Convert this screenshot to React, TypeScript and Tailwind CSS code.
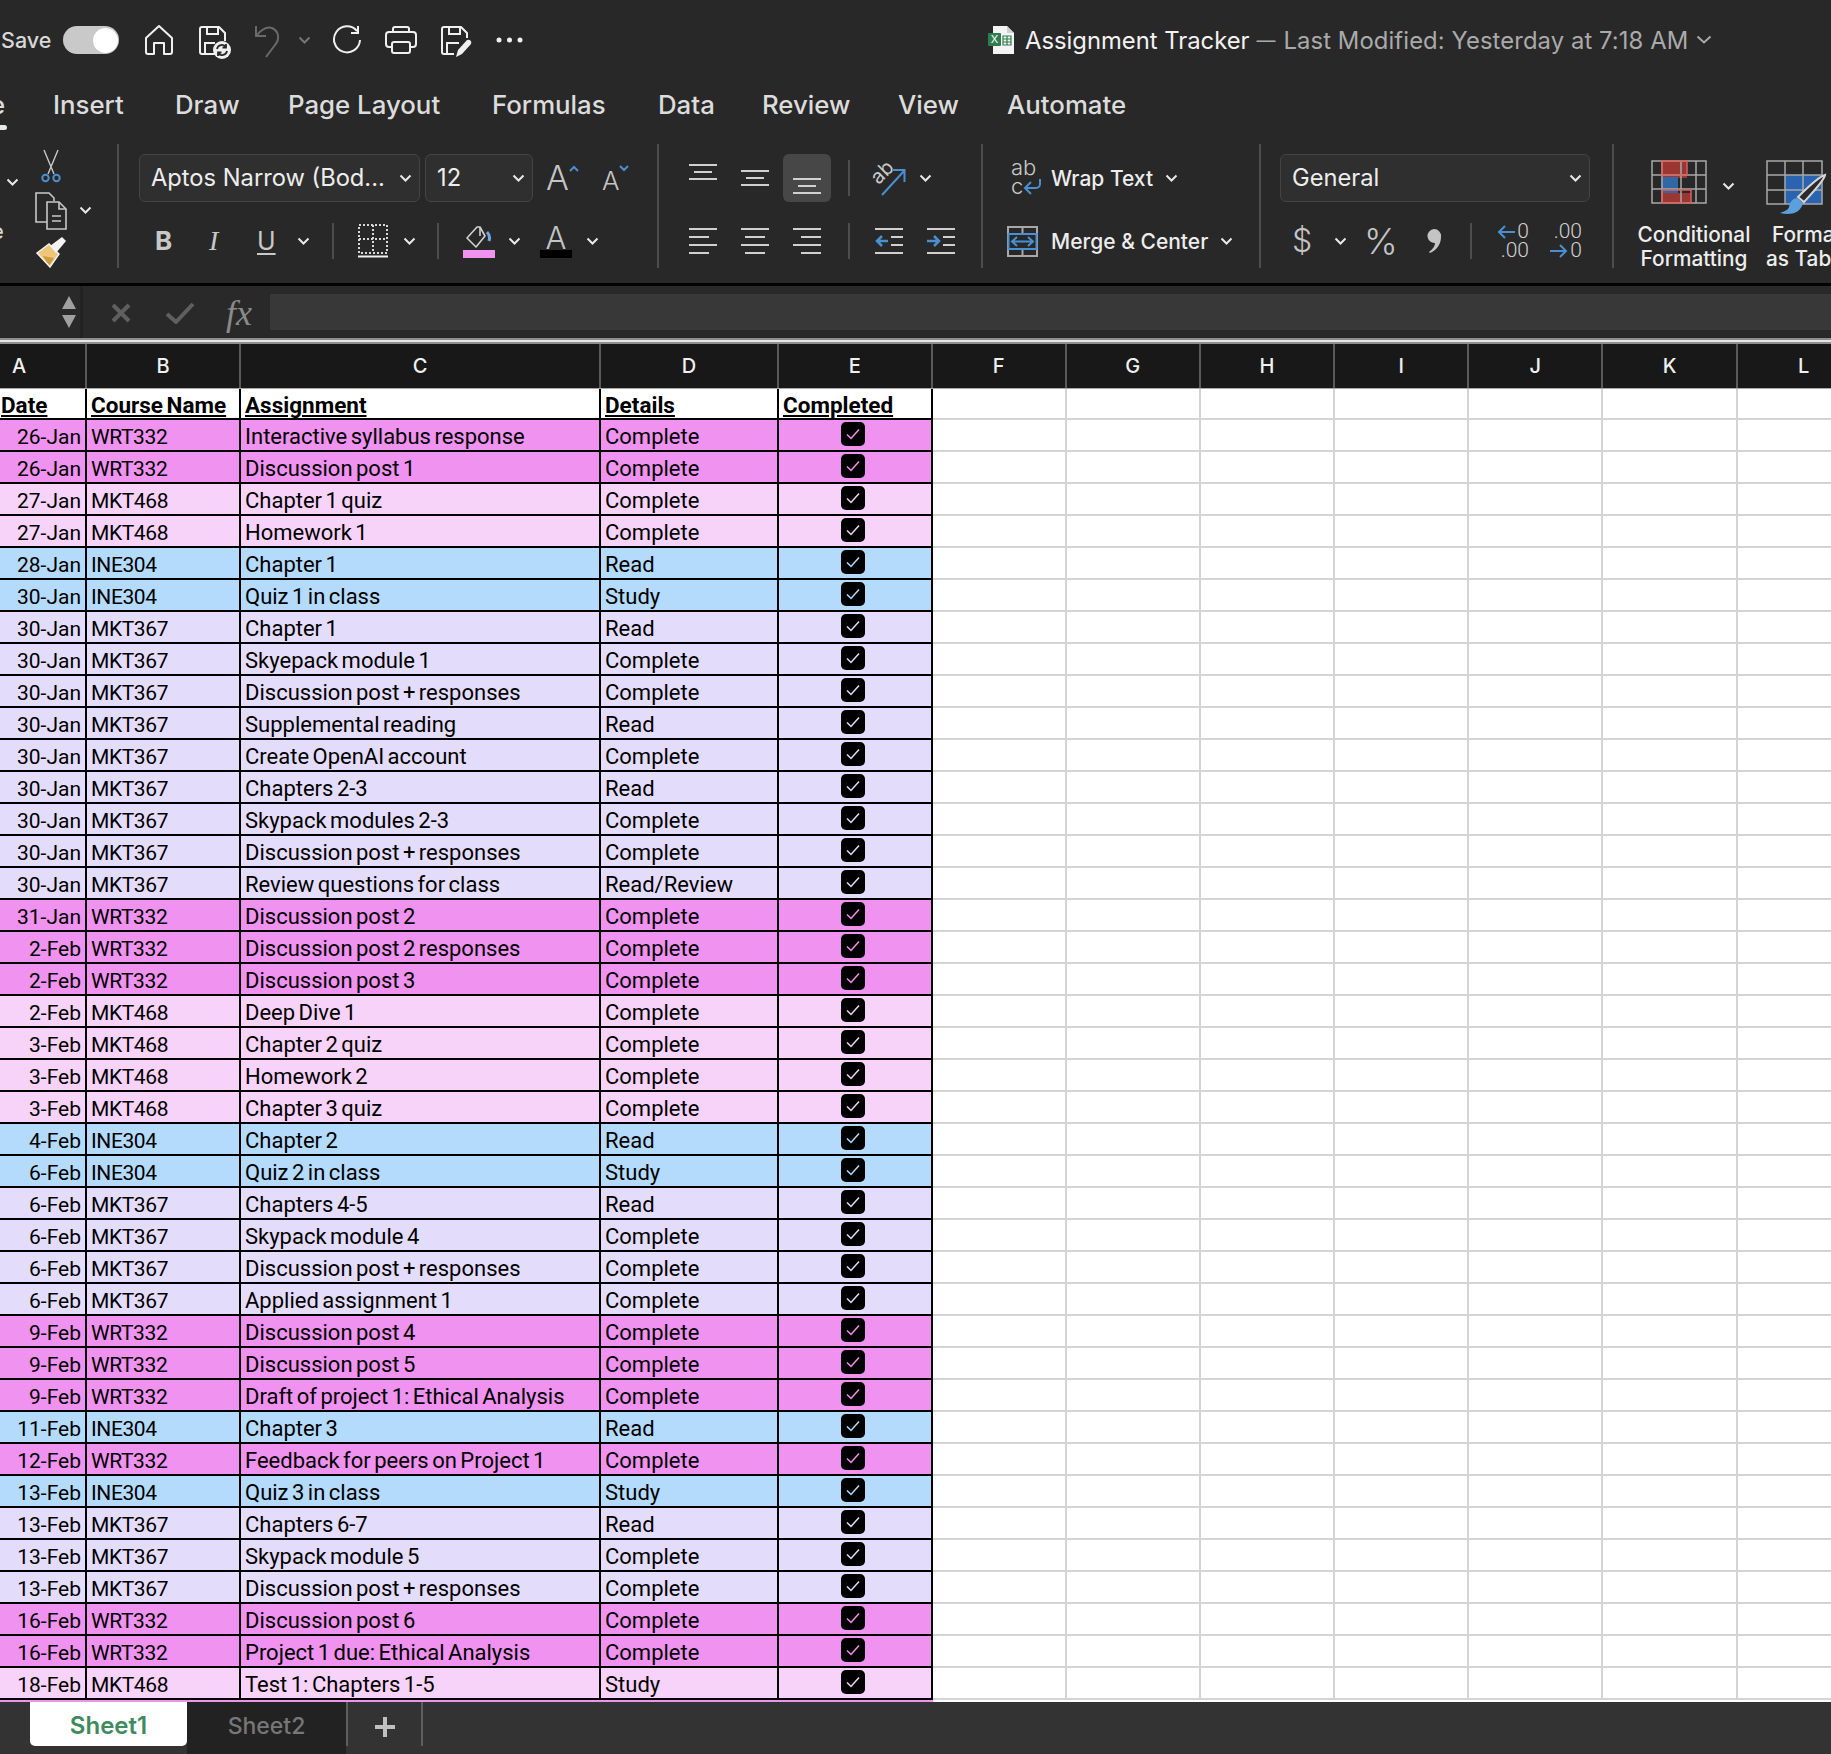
import React from "react";

type Row = [string, "W" | "M" | "I" | "K", string, string];

const courseName = { W: "WRT332", M: "MKT468", I: "INE304", K: "MKT367" };
const rowBg = { W: "bg-[#f092f0]", M: "bg-[#f7d3f9]", I: "bg-[#b4dbfb]", K: "bg-[#e4dcfb]" };
const checkColor = { W: "text-[#f092f0]", M: "text-[#f7d3f9]", I: "text-[#b4dbfb]", K: "text-[#e4dcfb]" };

const rows: Row[] = [
  ["26-Jan", "W", "Interactive syllabus response", "Complete"],
  ["26-Jan", "W", "Discussion post 1", "Complete"],
  ["27-Jan", "M", "Chapter 1 quiz", "Complete"],
  ["27-Jan", "M", "Homework 1", "Complete"],
  ["28-Jan", "I", "Chapter 1", "Read"],
  ["30-Jan", "I", "Quiz 1 in class", "Study"],
  ["30-Jan", "K", "Chapter 1", "Read"],
  ["30-Jan", "K", "Skyepack module 1", "Complete"],
  ["30-Jan", "K", "Discussion post + responses", "Complete"],
  ["30-Jan", "K", "Supplemental reading", "Read"],
  ["30-Jan", "K", "Create OpenAI account", "Complete"],
  ["30-Jan", "K", "Chapters 2-3", "Read"],
  ["30-Jan", "K", "Skypack modules 2-3", "Complete"],
  ["30-Jan", "K", "Discussion post + responses", "Complete"],
  ["30-Jan", "K", "Review questions for class", "Read/Review"],
  ["31-Jan", "W", "Discussion post 2", "Complete"],
  ["2-Feb", "W", "Discussion post 2 responses", "Complete"],
  ["2-Feb", "W", "Discussion post 3", "Complete"],
  ["2-Feb", "M", "Deep Dive 1", "Complete"],
  ["3-Feb", "M", "Chapter 2 quiz", "Complete"],
  ["3-Feb", "M", "Homework 2", "Complete"],
  ["3-Feb", "M", "Chapter 3 quiz", "Complete"],
  ["4-Feb", "I", "Chapter 2", "Read"],
  ["6-Feb", "I", "Quiz 2 in class", "Study"],
  ["6-Feb", "K", "Chapters 4-5", "Read"],
  ["6-Feb", "K", "Skypack module 4", "Complete"],
  ["6-Feb", "K", "Discussion post + responses", "Complete"],
  ["6-Feb", "K", "Applied assignment 1", "Complete"],
  ["9-Feb", "W", "Discussion post 4", "Complete"],
  ["9-Feb", "W", "Discussion post 5", "Complete"],
  ["9-Feb", "W", "Draft of project 1: Ethical Analysis", "Complete"],
  ["11-Feb", "I", "Chapter 3", "Read"],
  ["12-Feb", "W", "Feedback for peers on Project 1", "Complete"],
  ["13-Feb", "I", "Quiz 3 in class", "Study"],
  ["13-Feb", "K", "Chapters 6-7", "Read"],
  ["13-Feb", "K", "Skypack module 5", "Complete"],
  ["13-Feb", "K", "Discussion post + responses", "Complete"],
  ["16-Feb", "W", "Discussion post 6", "Complete"],
  ["16-Feb", "W", "Project 1 due: Ethical Analysis", "Complete"],
  ["18-Feb", "M", "Test 1: Chapters 1-5", "Study"],
];

const emptyCols = ["F", "G", "H", "I", "J", "K", "L"];
const gridCols = "grid grid-cols-[87px_154px_360px_178px_153.500px_repeat(7,134.2px)]";

function Chevron({ className = "" }: { className?: string }) {
  return (
    <svg width="13" height="9" viewBox="0 0 13 9" fill="none" stroke="#e8e8e8" strokeWidth="2" className={`shrink-0 ${className}`}>
      <path d="M1.5 1.5l5 5 5-5" />
    </svg>
  );
}

function AlignLines({ widths }: { widths: [number, number, number][] }) {
  return (
    <svg width="28" height="28" viewBox="0 0 28 28" stroke="#d0d0d0" strokeWidth="2" className="shrink-0">
      {widths.map(([x1, x2, y], i) => (
        <line key={i} x1={x1} x2={x2} y1={y} y2={y} />
      ))}
    </svg>
  );
}

function TopIcons() {
  return (
    <>
      <svg width="30" height="32" viewBox="0 0 30 32" fill="none" stroke="#f0f0f0" strokeWidth="2" className="ml-[25px]">
        <path d="M2 14L15 2l13 12v14a2 2 0 0 1-2 2h-6V19h-10v11H4a2 2 0 0 1-2-2z" strokeLinejoin="round" />
      </svg>
      <svg width="34" height="34" viewBox="0 0 34 34" fill="none" stroke="#f0f0f0" strokeWidth="2" className="ml-[24px] mt-[4px]">
        <path d="M18 29H4a2 2 0 0 1-2-2V4a2 2 0 0 1 2-2h17l6 6v8" strokeLinejoin="round" />
        <path d="M9 2v7h11V2M7 29V18h10" />
        <circle cx="24" cy="25" r="9" fill="#f0f0f0" stroke="none" />
        <path d="M19 24a5 5 0 0 1 9-2M29 26a5 5 0 0 1-9 2M28 19v3.500h-3.500M20 31v-3.500h3.500" stroke="#282828" strokeWidth="1.800" />
      </svg>
      <svg width="28" height="34" viewBox="0 0 28 34" fill="none" stroke="#6a6a6a" strokeWidth="2" className="ml-[22px] mt-[2px]">
        <path d="M2 2v10h10M2 12C7 6 12 2 18 4c7 3 8 11 3 17l-9 12" />
      </svg>
      <Chevron className="ml-[16px] opacity-40" />
      <svg width="30" height="30" viewBox="0 0 30 30" fill="none" stroke="#f0f0f0" strokeWidth="2" className="ml-[21px]">
        <path d="M25 6a13 13 0 1 0 3 9M26 1v7h-7" />
      </svg>
      <svg width="34" height="30" viewBox="0 0 34 30" fill="none" stroke="#f0f0f0" strokeWidth="2" className="ml-[22px]">
        <path d="M8 22H5a3 3 0 0 1-3-3V10a3 3 0 0 1 3-3h24a3 3 0 0 1 3 3v9a3 3 0 0 1-3 3h-3" />
        <path d="M9 7V4a2 2 0 0 1 2-2h12a2 2 0 0 1 2 2v3" />
        <rect x="8" y="17" width="18" height="11" rx="2" />
      </svg>
      <svg width="32" height="34" viewBox="0 0 32 34" fill="none" stroke="#f0f0f0" strokeWidth="2" className="ml-[22px] mt-[4px]">
        <path d="M14 29H4a2 2 0 0 1-2-2V4a2 2 0 0 1 2-2h17l6 6v5" strokeLinejoin="round" />
        <path d="M9 2v7h11V2M7 29V18h12" />
        <path d="M16 32l2-7 9-10a3 3 0 0 1 4 4l-9 10z" fill="#f0f0f0" stroke="none" />
      </svg>
      <svg width="28" height="6" viewBox="0 0 28 6" fill="#f0f0f0" className="ml-[24px]">
        <circle cx="3" cy="3" r="2.500" />
        <circle cx="13.500" cy="3" r="2.500" />
        <circle cx="24" cy="3" r="2.500" />
      </svg>
    </>
  );
}

function TitleBar() {
  return (
    <div className="flex h-[80px] items-center">
      <span className="ml-[1px] w-[63px] shrink-0 text-[21.500px] font-medium text-[#d8d8d8]">Save</span>
      <div className="ml-[-1px] flex h-[28px] w-[56px] shrink-0 items-center justify-end rounded-full bg-[#c9c9c9] pr-[1px]">
        <div className="h-[25px] w-[25px] rounded-full bg-white" />
      </div>
      <TopIcons />
      <svg width="27" height="30" viewBox="0 0 27 30" className="ml-[464px] shrink-0">
        <path d="M5 1h14l7 7v21H5z" fill="#f4f4f4" />
        <path d="M19 1v7h7z" fill="#cfcfcf" />
        <rect x="0" y="8" width="13" height="13" rx="1" fill="#2f7d4f" />
        <text x="6.500" y="18" textAnchor="middle" fontSize="11" fill="#ffffff" fontFamily="Inter, sans-serif">X</text>
        <path d="M15 11h8v9h-8zM15 14h8M15 17h8M19 11v9" stroke="#2f7d4f" strokeWidth="1.200" fill="none" />
      </svg>
      <div className="mt-[2px] flex items-center text-[23.800px]">
        <span className="ml-[10px] whitespace-nowrap text-[#f2f2f2]">Assignment Tracker</span>
        <span className="ml-[7px] whitespace-nowrap text-[19px] text-[#aaaaaa]">—</span>
        <span className="ml-[8px] whitespace-nowrap tracking-[0.1px] text-[#aaaaaa]">Last Modified: Yesterday at 7:18 AM</span>
      </div>
      <svg width="16" height="10" viewBox="0 0 16 10" fill="none" stroke="#aaaaaa" strokeWidth="2" className="ml-[8px] shrink-0">
        <path d="M1.500 1.500L8 7.500l6.500-6" />
      </svg>
    </div>
  );
}

function TabRow() {
  const tabs = [
    ["Insert", "w-[122px]"],
    ["Draw", "w-[113px]"],
    ["Page Layout", "w-[204px]"],
    ["Formulas", "w-[166px]"],
    ["Data", "w-[104px]"],
    ["Review", "w-[136px]"],
    ["View", "w-[109px]"],
    ["Automate", "w-[130px]"],
  ];
  return (
    <div className="flex h-[50px] text-[25.800px] font-medium text-[#dcdcdc]">
      <div className="flex h-[50px] w-[53px] shrink-0 flex-col overflow-hidden">
        <span className="ml-[-10px] leading-[50px]">e</span>
        <div className="mt-[-5px] h-[5px] w-[7px] rounded-r-full bg-[#e8e8e8]" />
      </div>
      {tabs.map(([name, w]) => (
        <span key={name} className={`${w} shrink-0 leading-[50px]`}>
          {name}
        </span>
      ))}
    </div>
  );
}

function Separator() {
  return <div className="mt-[14px] h-[124px] w-[2px] shrink-0 bg-[#4d4d4d]" />;
}

function SmallSep() {
  return <div className="h-[36px] w-[2px] shrink-0 bg-[#4d4d4d]" />;
}

function Clipboard() {
  return (
    <div className="flex w-[117px] shrink-0 pt-[19px]">
      <div className="flex w-[33px] shrink-0 flex-col">
        <Chevron className="ml-[6px] mt-[29px]" />
        <span className="ml-[-9px] mt-[31px] text-[22px] leading-[26px] text-[#d8d8d8]">e</span>
      </div>
      <div className="flex w-[36px] shrink-0 flex-col items-center">
        <svg width="24" height="34" viewBox="0 0 24 34" fill="none" strokeWidth="1.400">
          <path d="M5 1l10 24M19 1L9 25" stroke="#c8c8c8" />
          <circle cx="6.500" cy="29" r="3.200" stroke="#4a90d0" strokeWidth="2" />
          <circle cx="17.500" cy="29" r="3.200" stroke="#4a90d0" strokeWidth="2" />
        </svg>
        <svg width="32" height="38" viewBox="0 0 32 38" fill="none" stroke="#c8c8c8" strokeWidth="1.600" className="mt-[9px]">
          <path d="M12 30H1V1h13l5 5v3" />
          <path d="M12 10h12l7 7v20H12z" />
          <path d="M24 10v7h7M17 24h9M17 29h9" />
        </svg>
        <svg width="32" height="32" viewBox="0 0 32 32" className="mt-[6px]">
          <path d="M2 17l12-9 10 10-9 13z" fill="#edc679" />
          <path d="M8 20l11 2-5 8z" fill="#cf9c3e" />
          <path d="M2 17l12-9 10 10-9 13z" fill="none" stroke="#f3f3f3" strokeWidth="1.500" />
          <path d="M15 10L27 1l4 4-10 12z" fill="#f3f3f3" />
        </svg>
      </div>
      <Chevron className="ml-[10px] mt-[57px]" />
    </div>
  );
}

function FontGroup() {
  return (
    <div className="flex w-[538px] shrink-0 flex-col pt-[24px]">
      <div className="flex h-[48px] items-center">
        <div className="ml-[20px] flex h-[48px] w-[281px] shrink-0 items-center justify-between rounded-[6px] border border-[#444444] bg-[#2f2f2f] pl-[11px] pr-[7px] text-[23.700px] text-[#ededed]">
          <span>Aptos Narrow (Bod...</span>
          <Chevron />
        </div>
        <div className="ml-[5px] flex h-[48px] w-[108px] shrink-0 items-center justify-between rounded-[6px] border border-[#444444] bg-[#2f2f2f] pl-[11px] pr-[7px] text-[23.700px] text-[#ededed]">
          <span>12</span>
          <Chevron />
        </div>
        <span className="ml-[13px] text-[34px] font-light leading-none text-[#c4c4c4]">A</span>
        <svg width="10" height="7" viewBox="0 0 10 7" fill="none" stroke="#4a90d0" strokeWidth="2" className="mb-[20px]">
          <path d="M1 6l4-4 4 4" />
        </svg>
        <span className="ml-[23px] mt-[6px] text-[26px] font-light leading-none text-[#c4c4c4]">A</span>
        <svg width="10" height="7" viewBox="0 0 10 7" fill="none" stroke="#4a90d0" strokeWidth="2" className="mb-[20px]">
          <path d="M1 1l4 4 4-4" />
        </svg>
      </div>
      <div className="mt-[15px] flex h-[48px] items-center">
        <span className="ml-[36px] w-[15px] text-[26px] font-bold leading-none text-[#c8c8c8]">B</span>
        <span className="ml-[39px] w-[15px] font-['Liberation_Serif',serif] text-[28px] italic leading-none text-[#c8c8c8]">I</span>
        <span className="ml-[33px] w-[20px] text-[25px] leading-none text-[#c8c8c8] underline underline-offset-[3px]">U</span>
        <Chevron className="ml-[20px]" />
        <div className="ml-[22px]"><SmallSep /></div>
        <svg width="30" height="36" viewBox="0 0 30 36" fill="none" stroke="#d8d8d8" strokeWidth="2" className="ml-[24px]">
          <rect x="1" y="2" width="28" height="28" strokeDasharray="2 2" />
          <path d="M1 16h28M15 2v28" strokeDasharray="2 2" />
          <path d="M0 33.500h30" stroke="#f0f0f0" />
        </svg>
        <Chevron className="ml-[15px]" />
        <div className="ml-[21px]"><SmallSep /></div>
        <div className="ml-[24px] flex w-[32px] shrink-0 flex-col items-center">
          <svg width="26" height="24" viewBox="0 0 26 24" fill="none" stroke="#d0d0d0" strokeWidth="1.600">
            <path d="M1 13L11 2h3l5 9-9 11z" strokeLinejoin="round" />
            <path d="M14 2v9" />
            <path d="M21 7c3 3 3 6 2 9" stroke="#6fa8dc" strokeWidth="3" />
          </svg>
          <div className="mt-[1px] h-[8px] w-[32px] bg-[#f092f0]" />
        </div>
        <Chevron className="ml-[13px]" />
        <div className="ml-[19px] flex w-[32px] shrink-0 flex-col items-center">
          <span className="text-[31px] font-light leading-[25px] text-[#c4c4c4]">A</span>
          <div className="h-[8px] w-[32px] bg-black" />
        </div>
        <Chevron className="ml-[14px]" />
      </div>
    </div>
  );
}

function AlignGroup() {
  return (
    <div className="flex w-[322px] shrink-0 flex-col pt-[24px]">
      <div className="flex h-[48px] items-center">
        <div className="ml-[30px]"><AlignLines widths={[[0, 28, 1], [5, 23, 8], [0, 28, 15]]} /></div>
        <div className="ml-[24px]"><AlignLines widths={[[0, 28, 7], [5, 23, 14], [0, 28, 21]]} /></div>
        <div className="ml-[14px] flex h-[48px] w-[48px] shrink-0 items-end justify-center rounded-[6px] bg-[#474747] pb-[5px]">
          <AlignLines widths={[[0, 28, 10], [5, 23, 17], [0, 28, 24]]} />
        </div>
        <div className="ml-[17px]"><SmallSep /></div>
        <svg width="34" height="36" viewBox="0 0 34 36" fill="none" className="ml-[22px]">
          <text x="1" y="20" fontSize="20" fill="#c8c8c8" fontFamily="Inter, sans-serif" transform="rotate(-45 10 16)">ab</text>
          <path d="M10 35L32 11M20 10h12.500v12" stroke="#4a90d0" strokeWidth="2" />
        </svg>
        <Chevron className="ml-[13px]" />
      </div>
      <div className="mt-[15px] flex h-[48px] items-center">
        <div className="ml-[30px]"><AlignLines widths={[[0, 28, 2], [0, 20, 10], [0, 28, 18], [0, 20, 26]]} /></div>
        <div className="ml-[24px]"><AlignLines widths={[[0, 28, 2], [4, 24, 10], [0, 28, 18], [4, 24, 26]]} /></div>
        <div className="ml-[24px] mr-[27px]"><AlignLines widths={[[0, 28, 2], [8, 28, 10], [0, 28, 18], [8, 28, 26]]} /></div>
        <SmallSep />
        <svg width="28" height="28" viewBox="0 0 28 28" fill="none" stroke="#d0d0d0" strokeWidth="2" className="ml-[25px]">
          <path d="M0 2h28M16 10h12M16 18h12M0 26h28" />
          <path d="M13 14H2M7 9l-5 5 5 5" stroke="#4a90d0" strokeWidth="2.500" />
        </svg>
        <svg width="28" height="28" viewBox="0 0 28 28" fill="none" stroke="#d0d0d0" strokeWidth="2" className="ml-[24px]">
          <path d="M0 2h28M16 10h12M16 18h12M0 26h28" />
          <path d="M0 14h11M7 9l5 5-5 5" stroke="#4a90d0" strokeWidth="2.500" />
        </svg>
      </div>
    </div>
  );
}

function WrapGroup() {
  return (
    <div className="flex w-[276px] shrink-0 flex-col pt-[24px]">
      <div className="flex h-[48px] items-center text-[21px] font-medium text-[#ededed]">
        <svg width="32" height="36" viewBox="0 0 32 36" fill="none" className="ml-[28px]">
          <text x="0" y="15" fontSize="22" fontWeight="300" fill="#c8c8c8" fontFamily="Inter, sans-serif">ab</text>
          <text x="0" y="34" fontSize="22" fontWeight="300" fill="#c8c8c8" fontFamily="Inter, sans-serif">c</text>
          <path d="M29 19v5a4 4 0 0 1-4 4H15M20 22l-6 6 6 6" stroke="#4a90d0" strokeWidth="2" />
        </svg>
        <span className="ml-[8px] mt-[2px] whitespace-nowrap">Wrap Text</span>
        <Chevron className="ml-[12px]" />
      </div>
      <div className="mt-[15px] flex h-[48px] items-center text-[21px] font-medium text-[#ededed]">
        <svg width="31" height="31" viewBox="0 0 31 31" fill="none" stroke="#a8a8a8" strokeWidth="2" className="ml-[24px] shrink-0">
          <path d="M1 1h29v29H1zM15.500 1v7M15.500 23v7" />
          <rect x="1.500" y="8" width="28" height="15" stroke="#4a90d0" />
          <path d="M5 15.500h21M10 11l-5 4.500 5 4.500M21 11l5 4.500-5 4.500" stroke="#4a90d0" />
        </svg>
        <span className="ml-[13px] mt-[2px] whitespace-nowrap">Merge &amp; Center</span>
        <Chevron className="ml-[12px]" />
      </div>
    </div>
  );
}

function NumberGroup() {
  return (
    <div className="flex w-[351px] shrink-0 flex-col pt-[24px]">
      <div className="flex h-[48px] items-center">
        <div className="ml-[19px] flex h-[48px] w-[310px] shrink-0 items-center justify-between rounded-[6px] border border-[#444444] bg-[#2f2f2f] pl-[11px] pr-[7px] text-[23.700px] text-[#ededed]">
          <span>General</span>
          <Chevron />
        </div>
      </div>
      <div className="mt-[15px] flex h-[48px] items-center">
        <span className="ml-[31px] w-[20px] text-[32px] font-light leading-none text-[#c4c4c4]">$</span>
        <Chevron className="ml-[22px]" />
        <span className="ml-[17px] w-[34px] text-[36px] font-light leading-none text-[#c4c4c4]">%</span>
        <svg width="16" height="26" viewBox="0 0 16 26" fill="#c4c4c4" className="ml-[28px] shrink-0">
          <path d="M8 1a7 7 0 0 1 7 8c0 7-4 13-11 16l-1-1c4-3 6-6 6-9a7 7 0 1 1-1-14z" />
        </svg>
        <div className="ml-[28px]"><SmallSep /></div>
        <div className="ml-[25px] flex w-[32px] shrink-0 flex-col text-right font-['Roboto',sans-serif] text-[21px] font-light leading-[19px] text-[#d0d0d0]">
          <div className="flex items-center justify-between">
            <svg width="18" height="14" viewBox="0 0 18 14" fill="none" stroke="#4a90d0" strokeWidth="2"><path d="M18 7H2M8 1L2 7l6 6" /></svg>
            <span>0</span>
          </div>
          <span>.00</span>
        </div>
        <div className="ml-[21px] flex w-[32px] shrink-0 flex-col text-right font-['Roboto',sans-serif] text-[21px] font-light leading-[19px] text-[#d0d0d0]">
          <span>.00</span>
          <div className="flex items-center justify-between">
            <svg width="18" height="14" viewBox="0 0 18 14" fill="none" stroke="#4a90d0" strokeWidth="2"><path d="M0 7h16M10 1l6 6-6 6" /></svg>
            <span>0</span>
          </div>
        </div>
      </div>
    </div>
  );
}

function StylesGroup() {
  return (
    <div className="flex shrink-0 pt-[30px] text-center text-[20.800px] font-medium leading-[24px] text-[#ededed]">
      <div className="ml-[23px] flex w-[114px] shrink-0 flex-col items-center">
        <div className="flex h-[44px] items-start self-start pl-[14px]">
          <svg width="56" height="44" viewBox="0 0 56 44" fill="none" className="shrink-0">
            <rect x="11" y="1" width="25" height="17" fill="#9c3633" />
            <rect x="10" y="17" width="17" height="16" fill="#2f68a5" />
            <rect x="11" y="33" width="29" height="10" fill="#9c3633" />
            <path d="M1 1h54v42H1zM1 15h54M1 29h54M11 1v42M30 1v42M45 1v42" stroke="#a8a8a8" strokeWidth="1.500" />
            <path d="M11 1h25v14H11zM11 30h29v13H11z" stroke="#d8605c" strokeWidth="1.500" />
          </svg>
          <Chevron className="ml-[15px] mt-[22px]" />
        </div>
        <span className="mt-[19px] whitespace-nowrap">Conditional</span>
        <span className="whitespace-nowrap">Formatting</span>
      </div>
      <div className="ml-[15px] flex w-[70px] shrink-0 flex-col items-start">
        <svg width="64" height="56" viewBox="0 0 64 56" fill="none" className="shrink-0">
          <rect x="19" y="15" width="37" height="29" fill="#2a63b0" />
          <path d="M1 1h55v43H1zM1 15h55M1 30h55M19 1v43M37 1v43" stroke="#a8a8a8" strokeWidth="1.500" />
          <path d="M59 15c-1 6-14 19-21 27l-6-5c8-8 20-20 27-22z" fill="#2a2a2a" stroke="#d4d4d4" strokeWidth="2" />
          <path d="M31 38c-6 1-7 5-8 9-1 3-4 4-9 6 8 2 20 2 23-10z" fill="#5ba0dc" />
        </svg>
        <span className="ml-[6px] mt-[7px] whitespace-nowrap">Format</span>
        <span className="whitespace-nowrap">as Table</span>
      </div>
    </div>
  );
}

function Ribbon() {
  return (
    <div className="flex h-[156px] shrink-0 overflow-hidden border-b-[3px] border-black">
      <Clipboard />
      <Separator />
      <FontGroup />
      <Separator />
      <AlignGroup />
      <Separator />
      <WrapGroup />
      <Separator />
      <NumberGroup />
      <Separator />
      <StylesGroup />
    </div>
  );
}

function FormulaBar() {
  return (
    <div className="flex h-[52px] shrink-0 bg-[#292929]">
      <div className="flex w-[80px] shrink-0 flex-col items-end justify-center gap-[6px] pr-[4px]">
        <svg width="14" height="13" viewBox="0 0 14 13" fill="#a0a0a0"><path d="M7 0l7 13H0z" /></svg>
        <svg width="14" height="13" viewBox="0 0 14 13" fill="#a0a0a0"><path d="M7 13l7-13H0z" /></svg>
      </div>
      <div className="h-[52px] w-[3px] shrink-0 bg-[#222222]" />
      <div className="flex w-[187px] shrink-0 items-center pl-[27px] pt-[2px]">
        <svg width="22" height="20" viewBox="0 0 22 20" fill="none" stroke="#5f5f5f" strokeWidth="4"><path d="M3 2l16 16M19 2L3 18" /></svg>
        <svg width="30" height="22" viewBox="0 0 30 22" fill="none" stroke="#5f5f5f" strokeWidth="4" className="ml-[33px]"><path d="M2 12l9 8L28 2" /></svg>
        <span className="ml-[31px] font-['Liberation_Serif',serif] text-[36px] italic leading-none text-[#8a8a8a]">fx</span>
      </div>
      <div className="my-[8px] flex-1 bg-[#383838]" />
    </div>
  );
}

function Check({ kind }: { kind: Row[1] }) {
  return (
    <div className={`ml-[62px] mt-[2px] flex h-[24px] w-[24px] items-center justify-center self-start rounded-[5px] bg-black ${checkColor[kind]}`}>
      <svg width="16" height="14" viewBox="0 0 16 14" fill="none" stroke="currentColor" strokeWidth="1.500">
        <path d="M2 7.500l4 4 8-9" />
      </svg>
    </div>
  );
}

function Sheet() {
  const cell = "flex items-center overflow-hidden whitespace-nowrap border-b-2 border-r-2 border-black leading-none";
  return (
    <div className="h-[1364px] shrink-0 overflow-hidden bg-white font-['Roboto',sans-serif] text-[22px] text-black [word-spacing:-2px]">
      <div className="h-[6px] border-y-2 border-[#8e8e8e] bg-[#e6e6e6]" />
      <div className={`${gridCols} h-[45px] border-b border-[#a8a8a8] bg-[#181818] font-['Inter',sans-serif] text-[20px] font-medium text-[#f0f0f0]`}>
        {["A", "B", "C", "D", "E", ...emptyCols].map((c) => (
          <div key={c} className={`flex items-center border-r-2 border-[#5a5a5a] ${c === "A" ? "pl-[12px]" : "justify-center"}`}>
            {c}
          </div>
        ))}
      </div>
      <div className={`${gridCols} h-[31px] text-[22.500px] font-bold`}>
        {["Date", "Course Name", "Assignment", "Details", "Completed"].map((h, i) => (
          <div key={h} className={`${cell} pt-[3px] ${i === 0 ? "pl-[1px]" : "pl-[4px]"}`}>
            <span className="underline underline-offset-[2px]">{h}</span>
          </div>
        ))}
        {emptyCols.map((c) => (
          <div key={c} className="border-b-2 border-r-2 border-[#d4d4d4]" />
        ))}
      </div>
      {rows.map(([date, kind, task, detail], i) => (
        <div key={i} className={`${gridCols} h-[32px]`}>
          <div className={`${cell} ${rowBg[kind]} justify-end pr-[4px] pt-[4px] text-[21px]`}>{date}</div>
          <div className={`${cell} ${rowBg[kind]} pl-[4px] pt-[4px] text-[21px] tracking-[-0.4px]`}>{courseName[kind]}</div>
          <div className={`${cell} ${rowBg[kind]} pl-[4px] pt-[4px]`}>{task}</div>
          <div className={`${cell} ${rowBg[kind]} pl-[4px] pt-[4px]`}>{detail}</div>
          <div className={`${cell} ${rowBg[kind]}`}>
            <Check kind={kind} />
          </div>
          {emptyCols.map((c) => (
            <div key={c} className="border-b-2 border-r-2 border-[#d4d4d4]" />
          ))}
        </div>
      ))}
      <div className={`${gridCols} h-[32px]`}>
        <div className="col-span-5 bg-[#f092f0]" />
      </div>
    </div>
  );
}

function SheetTabs() {
  return (
    <div className="flex h-[52px] shrink-0 bg-[#333333] text-[24px] font-semibold">
      <div className="ml-[30px] flex h-[44px] w-[157px] items-center justify-center rounded-b-[5px] bg-white pt-[3px] text-[#3f8a5e]">Sheet1</div>
      <div className="flex h-[52px] w-[159px] items-start justify-center bg-[#222222] pt-[7px] text-[23px] font-medium text-[#777777]">Sheet2</div>
      <div className="h-[44px] w-[2px] bg-[#5e5e5e]" />
      <div className="flex h-[44px] w-[73px] items-center justify-center pt-[6px]">
        <svg width="20" height="20" viewBox="0 0 20 20" stroke="#c0c0c0" strokeWidth="4"><path d="M10 0v20M0 10h20" /></svg>
      </div>
      <div className="h-[44px] w-[2px] bg-[#5e5e5e]" />
    </div>
  );
}

export default function App() {
  return (
    <div className="flex h-[1754px] w-[1831px] flex-col overflow-hidden bg-[#282828] font-['Inter',sans-serif]">
      <TitleBar />
      <TabRow />
      <Ribbon />
      <FormulaBar />
      <Sheet />
      <SheetTabs />
    </div>
  );
}
